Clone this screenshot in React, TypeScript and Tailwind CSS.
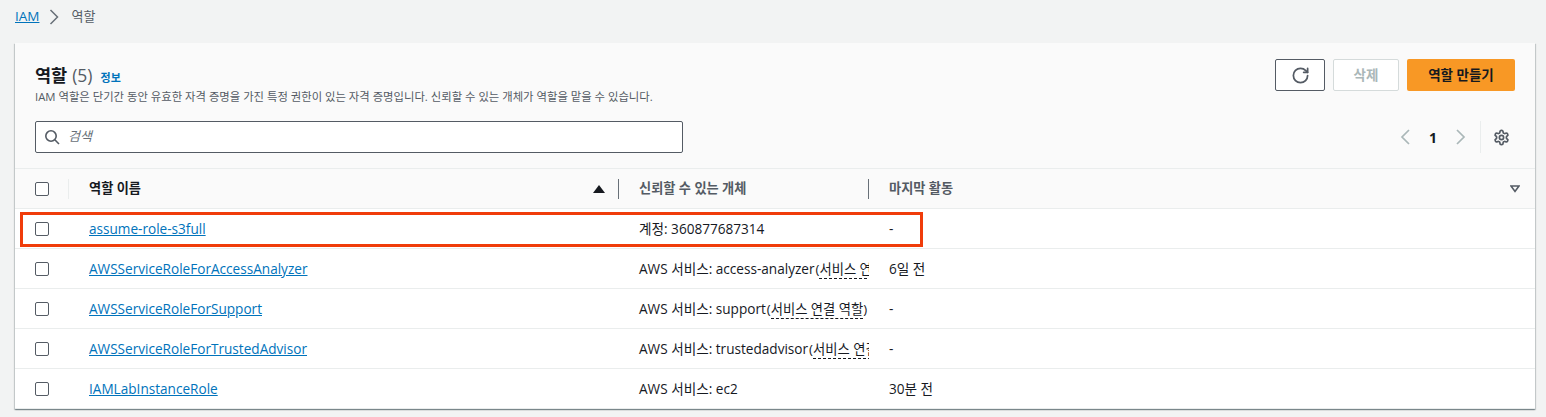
import { LuRotateCw, LuSettings } from "react-icons/lu";

const font = "font-['Open_Sans','Noto_Sans_CJK_KR',sans-serif]";

const roles = [
  { name: "assume-role-s3full", prefix: "계정: 360877687314", linked: false, last: "-" },
  { name: "AWSServiceRoleForAccessAnalyzer", prefix: "AWS 서비스: access-analyzer", linked: true, last: "6일 전" },
  { name: "AWSServiceRoleForSupport", prefix: "AWS 서비스: support", linked: true, last: "-" },
  { name: "AWSServiceRoleForTrustedAdvisor", prefix: "AWS 서비스: trustedadvisor", linked: true, last: "-" },
  { name: "IAMLabInstanceRole", prefix: "AWS 서비스: ec2", linked: false, last: "30분 전" },
];

const Checkbox = () => (
  <span className="block w-[14px] h-[14px] rounded-[2px] border border-[#545b64] bg-white"></span>
);

const Chevron = ({ left, color }: { left?: boolean; color: string }) => (
  <svg width="12" height="16" viewBox="0 0 12 16" fill="none" stroke={color} strokeWidth="1.7">
    <path d={left ? "M10 1 L3 8 L10 15" : "M2 1 L9 8 L2 15"} />
  </svg>
);

const App = () => {
  return (
    <div className={`w-[1546px] h-[417px] overflow-hidden bg-[#f2f3f3] text-[#16191f] ${font}`}>

      {/* Breadcrumb */}
      <div className="flex items-center h-[33px] pl-[15px] text-[13px]">
        <a className="text-[#0073bb] underline text-[13.5px]">IAM</a>
        <svg className="ml-[10px] mr-[12px]" width="10" height="18" viewBox="0 0 10 18" fill="none" stroke="#687078" strokeWidth="1.5">
          <path d="M1.500 2 L8.500 9 L1.500 16" />
        </svg>
        <span className="text-[#545b64]">역할</span>
      </div>

      {/* Card */}
      <div className="relative mt-[10px] ml-[15px] w-[1520px] h-[366px] bg-white shadow-[0_1px_1px_0_rgba(0,28,36,0.3),1px_1px_1px_0_rgba(0,28,36,0.15),-1px_1px_1px_0_rgba(0,28,36,0.15)]">

        {/* Header */}
        <div className="bg-[#fafafa] h-[126px] border-b border-[#eaeded] pl-[20px] pr-[20px] flex justify-between">
          <div className="pt-[19px]">
            <div className="flex items-baseline h-[24px]">
              <h1 className="text-[17.5px] font-bold leading-[24px]">역할</h1>
              <span className="text-[17.5px] text-[#545b64] ml-[5px]">(5)</span>
              <a className="text-[11px] font-bold text-[#0073bb] ml-[8px]">정보</a>
            </div>
            <p className="text-[11.35px] leading-[14px] text-[#545b64] mt-[4px]">
              IAM 역할은 단기간 동안 유효한 자격 증명을 가진 특정 권한이 있는 자격 증명입니다. 신뢰할 수 있는 개체가 역할을 맡을 수 있습니다.
            </p>
            <div className="mt-[17px] w-[648px] h-[32px] rounded-[2px] border border-[#545b64] bg-white flex items-center pl-[8px]">
              <svg width="16" height="16" viewBox="0 0 16 16" fill="none" stroke="#545b64" strokeWidth="1.6">
                <circle cx="7" cy="7" r="5.2" />
                <path d="M10.8 10.8 L15 15" />
              </svg>
              <span className="ml-[8px] text-[13px] italic text-[#687078]">검색</span>
            </div>
          </div>

          <div className="flex flex-col items-end pt-[16px]">
            <div className="flex items-center">
              <button className="w-[50px] h-[32px] rounded-[2px] border border-[#545b64] bg-white flex items-center justify-center text-[#545b64]">
                <LuRotateCw size={19} strokeWidth={2.2} />
              </button>
              <button className="ml-[8px] w-[66px] h-[32px] rounded-[2px] border border-[#d5dbdb] bg-white text-[13.5px] font-bold text-[#aab7b8]">
                삭제
              </button>
              <button className="ml-[8px] w-[108px] h-[32px] rounded-[2px] bg-[#f89825] text-[13.5px] font-bold text-[#16191f]">
                역할 만들기
              </button>
            </div>
            <div className="flex items-center mt-[30px] h-[32px]">
              <Chevron left color="#aab7b8" />
              <span className="ml-[18px] mr-[18px] text-[14px] font-bold">1</span>
              <Chevron color="#aab7b8" />
              <span className="ml-[13px] mr-[12px] w-px h-[32px] bg-[#eaeded]"></span>
              <span className="text-[#545b64] mr-[5px]"><LuSettings size={17} strokeWidth={2.4} /></span>
            </div>
          </div>
        </div>

        {/* Column headers */}
        <div className="flex h-[40px] bg-[#fafafa] border-b border-[#eaeded] text-[13.2px] font-bold text-[#545b64] items-center">
          <div className="w-[54px] h-[20px] pl-[20px] flex items-center border-r border-[#eaeded]"><Checkbox /></div>
          <div className="w-[550px] h-[20px] pl-[20px] pr-[13px] flex items-center justify-between border-r border-[#687078]">
            <span className="text-[#16191f]">역할 이름</span>
            <svg width="12" height="8" viewBox="0 0 12 8" fill="#16191f"><path d="M6 0 L12 8 L0 8 Z" /></svg>
          </div>
          <div className="w-[250px] h-[20px] pl-[20px] flex items-center border-r border-[#687078]">신뢰할 수 있는 개체</div>
          <div className="flex-1 h-[20px] pl-[20px] pr-[15px] flex items-center justify-between">
            <span>마지막 활동</span>
            <svg width="10" height="8" viewBox="0 0 10 8" fill="none" stroke="#545b64" strokeWidth="1.6"><path d="M1 1 H9 L5 6.500 Z" /></svg>
          </div>
        </div>

        {/* Rows */}
        {roles.map((role) => (
          <div key={role.name} className="flex items-center h-[40px] pt-[1px] bg-white border-b border-[#eaeded] last:border-b-0 text-[13.6px]">
            <div className="w-[54px] pl-[20px] -mt-[1px]"><Checkbox /></div>
            <div className="w-[550px] pl-[20px]"><a className="text-[#0073bb] underline">{role.name}</a></div>
            <div className="w-[250px] pl-[20px] overflow-hidden whitespace-nowrap">
              {role.prefix}
              {role.linked && (
                <span className="ml-[1px] text-[13.3px]">(<span className="border-b border-dashed border-[#16191f]">서비스 연결 역할</span>)</span>
              )}
            </div>
            <div className="flex-1 pl-[20px]">{role.last}</div>
          </div>
        ))}

        {/* Red highlight over first row */}
        <div className="absolute left-[5px] top-[169px] w-[903px] h-[35px] border-[3px] border-[#f03c0a]"></div>
      </div>
    </div>
  );
};

export default App;
